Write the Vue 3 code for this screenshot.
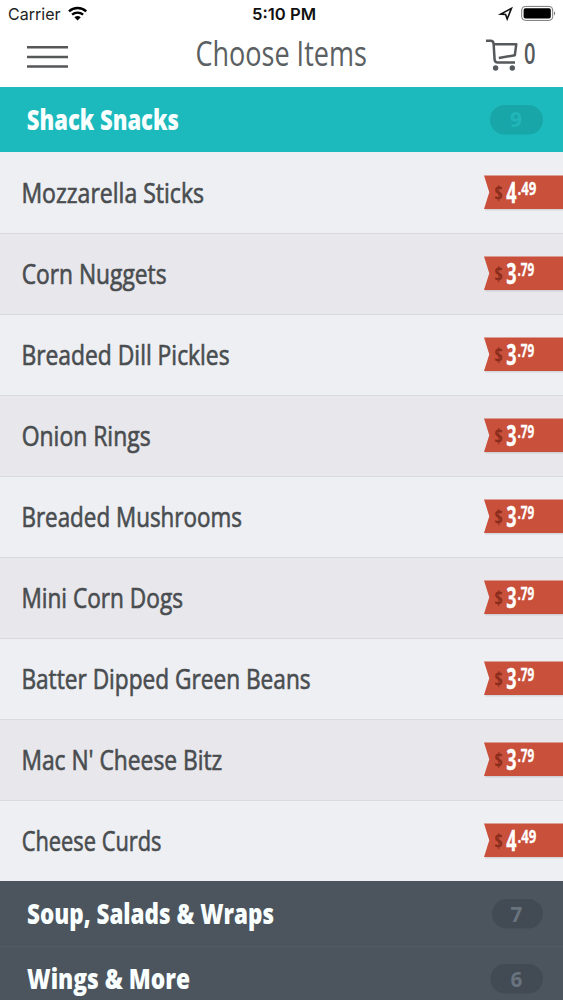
<script setup>
const items = [
  { name: 'Mozzarella Sticks', x: 21.4, width: 182.6, whole: '4', cents: '49' },
  { name: 'Corn Nuggets', x: 21.7, width: 144.8, whole: '3', cents: '79' },
  { name: 'Breaded Dill Pickles', x: 21.4, width: 208.2, whole: '3', cents: '79' },
  { name: 'Onion Rings', x: 21.7, width: 128.9, whole: '3', cents: '79' },
  { name: 'Breaded Mushrooms', x: 21.4, width: 220.6, whole: '3', cents: '79' },
  { name: 'Mini Corn Dogs', x: 21.4, width: 161.6, whole: '3', cents: '79' },
  { name: 'Batter Dipped Green Beans', x: 21.4, width: 289.2, whole: '3', cents: '79' },
  { name: "Mac N' Cheese Bitz", x: 21.4, width: 200.9, whole: '3', cents: '79' },
  { name: 'Cheese Curds', x: 21.7, width: 139.8, whole: '4', cents: '49' },
]
const sections = [
  { name: 'Soup, Salads & Wraps', width: 247, count: '7', x: 492 },
  { name: 'Wings & More', width: 163, count: '6', x: 490.5 },
]
</script>

<template>
  <div class="screen">
    <header>
      <svg width="563" height="87" viewBox="0 0 563 87">
        <text class="status" x="8" y="20" textLength="52.5" lengthAdjust="spacingAndGlyphs">Carrier</text>
        <g class="wifi">
          <path d="M69 11.4a12.6 12.6 0 0 1 17.2 0" />
          <path d="M72.1 14.7a8.2 8.2 0 0 1 11 0" />
        </g>
        <path d="M74.4 17.3a5 5 0 0 1 6.4 0L77.6 20.6z" />
        <text class="status clock" x="252" y="20" textLength="64" lengthAdjust="spacingAndGlyphs">5:10 PM</text>
        <path class="locate" d="M500.7 14.1L511.4 8.4L507.2 19L505.6 14.4z" />
        <rect class="shell" x="521.7" y="6.4" width="31" height="14" rx="3.6" />
        <rect x="523.6" y="8.2" width="27.2" height="10.4" rx="1.8" />
        <path class="nub" d="M554 11.2q2.4 2.2 0 4.4z" />
        <path class="menu" d="M27 47.3H68M27 57H68M27 66.5H68" />
        <text class="title" x="195.4" y="65.6" textLength="171.5" lengthAdjust="spacingAndGlyphs">Choose Items</text>
        <g class="cart">
          <path d="M486 40.7H490.8Q493.3 40.7 493.6 43.6L494.6 59.6Q494.9 62.4 497.6 62.4H515" />
          <path d="M494 44.2H516.3L514.8 55.3L498.8 57.9" />
        </g>
        <circle class="wheel" cx="495.6" cy="68" r="2.7" />
        <circle class="wheel" cx="512.3" cy="68" r="2.7" />
        <text class="amount" x="524" y="64.4" textLength="11.5" lengthAdjust="spacingAndGlyphs">0</text>
      </svg>
    </header>

    <section class="bar active">
      <svg width="563" height="65" viewBox="0 0 563 65">
        <text class="heading" x="26.8" y="43" textLength="152" lengthAdjust="spacingAndGlyphs">Shack Snacks</text>
        <rect class="pill" x="490" y="18" width="53" height="29.5" rx="14.75" />
        <text class="count" x="510" y="40.3" textLength="12" lengthAdjust="spacingAndGlyphs">9</text>
      </svg>
    </section>

    <ul>
      <li v-for="item in items" :key="item.name">
        <svg width="563" height="81" viewBox="0 0 563 81">
          <text class="name" :x="item.x" y="50.7" :textLength="item.width" lengthAdjust="spacingAndGlyphs">{{ item.name }}</text>
          <path class="shadow" d="M485 25H563V58.5H485L489.5 41z" />
          <path class="tag" d="M484 23.4H563V57H484L489.3 40.2z" />
          <text class="dollar" x="494.4" y="47.8" textLength="8.2" lengthAdjust="spacingAndGlyphs">$</text>
          <text class="price" x="506.2" y="51" textLength="10.3" lengthAdjust="spacingAndGlyphs">{{ item.whole }}</text>
          <text class="price cents" x="517.4" y="43.2" :textLength="item.whole === '4' ? 18.8 : 16.8" lengthAdjust="spacingAndGlyphs">.{{ item.cents }}</text>
        </svg>
      </li>
    </ul>

    <section v-for="section in sections" :key="section.name" class="bar">
      <svg width="563" height="65" viewBox="0 0 563 65">
        <text class="heading" x="27" y="43" :textLength="section.width" lengthAdjust="spacingAndGlyphs">{{ section.name }}</text>
        <rect class="pill" :x="section.x" y="18" :width="543 - section.x" height="29.5" rx="14.75" />
        <text class="count" x="510.6" y="41" textLength="11.8" lengthAdjust="spacingAndGlyphs">{{ section.count }}</text>
      </svg>
    </section>
  </div>
</template>

<style>
body {
  margin: 0;
  overflow: hidden;
}
</style>

<style scoped>
.screen {
  width: 563px;
  height: 1000px;
  overflow: hidden;
  background: #4c555e;
  font-family: "Open Sans", "Noto Sans", sans-serif;
}
svg {
  display: block;
}
header {
  height: 87px;
  background: #fff;
}
.status {
  font: 400 16.5px Inter, sans-serif;
  fill: #222;
}
.clock {
  font-weight: 600;
  fill: #111;
}
.wifi {
  fill: none;
  stroke: #000;
  stroke-width: 2.4;
}
.locate {
  fill: none;
  stroke: #111;
  stroke-width: 1.6;
}
.shell {
  fill: none;
  stroke: #777;
  stroke-width: 1;
}
.nub {
  fill: #777;
}
.menu {
  stroke: #555759;
  stroke-width: 2.5;
}
.title {
  font-size: 35px;
  font-weight: 400;
  fill: #5b6062;
}
.cart {
  fill: none;
  stroke: #56595b;
  stroke-width: 2.5;
  stroke-linejoin: round;
}
.wheel {
  fill: #56595b;
}
.amount {
  font-size: 29px;
  font-weight: 600;
  fill: #56595b;
}
.bar {
  height: 65px;
  background: #4c555e;
}
.bar + .bar {
  box-shadow: inset 0 1px #525b64;
}
.active {
  background: #1dbabd;
}
.heading {
  font-size: 29px;
  font-weight: 800;
  fill: #f9ffff;
}
.pill {
  fill: #424b54;
}
.count {
  font-size: 22px;
  font-weight: 700;
  fill: #69737d;
}
.active .pill {
  fill: #19a6a9;
}
.active .count {
  fill: #20b5b9;
}
ul {
  margin: 0;
  padding: 0;
  list-style: none;
}
li {
  height: 81px;
  background: #eeeff3;
  box-shadow: inset 0 1px #d9dadd;
}
li:first-child {
  box-shadow: none;
}
li:nth-child(even) {
  background: #e8e7eb;
}
.name {
  font-size: 28px;
  fill: #494d50;
  stroke: #494d50;
  stroke-width: 0.65;
}
.tag {
  fill: #c9503a;
}
.shadow {
  fill: #000;
  opacity: 0.1;
}
.dollar {
  font-size: 19px;
  font-weight: 700;
  fill: #8b2d1c;
}
.price {
  font-size: 28.5px;
  font-weight: 700;
  fill: #fff;
  stroke: #fff;
  stroke-width: 0.3;
}
.cents {
  font-size: 18.5px;
}
</style>
